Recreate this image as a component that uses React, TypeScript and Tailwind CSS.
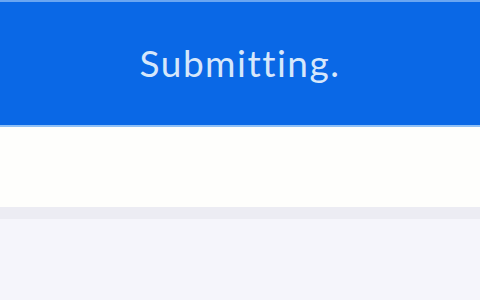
export default function App() {
  return (
    <div className="w-[480px] h-[300px] flex flex-col bg-[#f6f6fb]">
      {/* banner */}
      <div className="h-[2px] bg-[#6aa6f2]" />
      <div className="h-[123px] bg-[#0a68e6] flex items-center justify-center">
        <span className="text-[37px] leading-none text-[#d6e7fb] font-['Lato',sans-serif] tracking-[1.5px] pb-[2px]">
          Submitting.
        </span>
      </div>
      <div className="h-[2px] bg-[#8fc0f6]" />
      <div className="h-[80px] bg-[#fefefc]" />
      <div className="h-[12px] bg-[#ececf3]" />
      <div className="flex-1 bg-[#f5f5fb]" />
    </div>
  )
}
